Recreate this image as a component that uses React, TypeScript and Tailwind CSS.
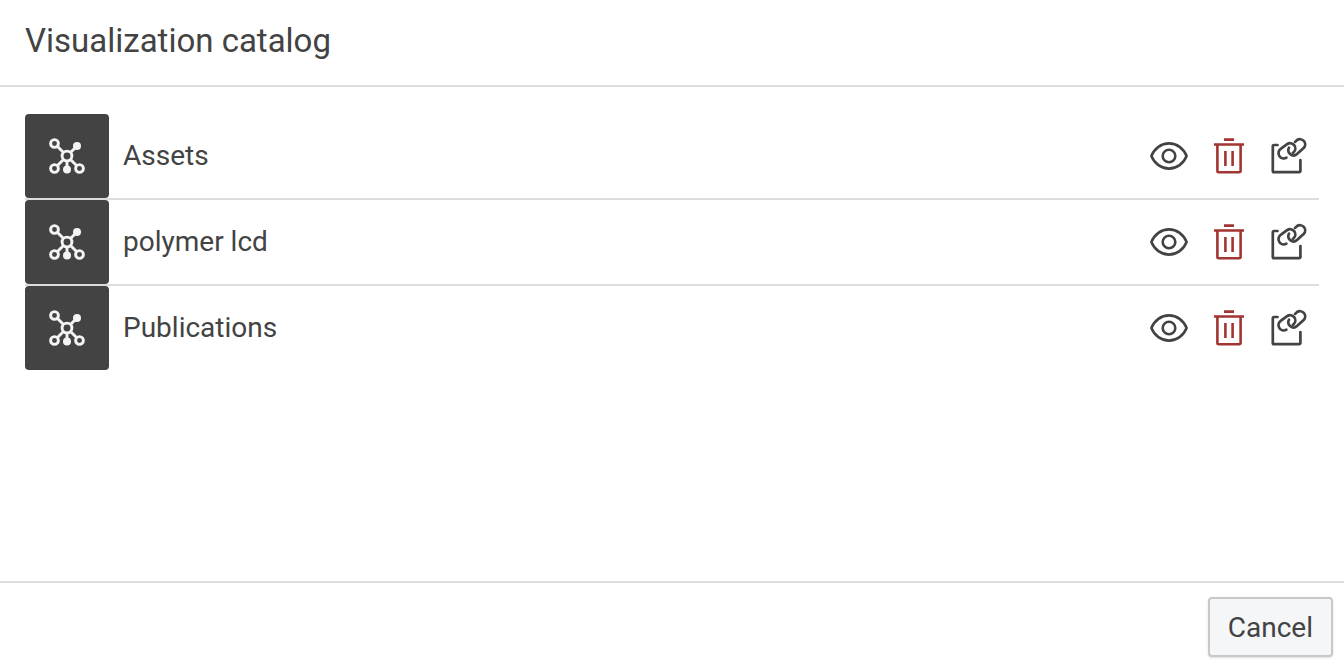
import React from "react";

const visualizations = ["Assets", "polymer lcd", "Publications"];

const GraphIcon = () => (
  <svg
    viewBox="0 0 40 40"
    className="w-10 h-10"
    fill="none"
    stroke="currentColor"
    strokeWidth="2.9"
    aria-hidden="true"
  >
    <path d="M10.5 10.5l6 6M23.5 16.5L29 11M16.5 23.5l-6 6M23.5 23.5l6 6M20 25v6" />
    <circle cx="20" cy="20" r="4.9" />
    <circle cx="7.5" cy="7.5" r="3.9" />
    <circle cx="7.5" cy="32.5" r="3.9" />
    <circle cx="32.5" cy="32.5" r="3.9" />
    <circle cx="30" cy="10" r="4" fill="currentColor" stroke="none" />
    <circle cx="20" cy="33.5" r="4" fill="currentColor" stroke="none" />
  </svg>
);

const ViewIcon = () => (
  <svg
    viewBox="0 0 40 40"
    className="w-10 h-10"
    fill="none"
    stroke="currentColor"
    strokeWidth="2.6"
    strokeLinejoin="round"
    aria-hidden="true"
  >
    <path d="M2.4 20C5.4 12.4 12.2 7.4 20 7.4S34.6 12.4 37.6 20C34.6 27.6 27.8 32.6 20 32.6S5.4 27.6 2.4 20z" />
    <circle cx="20" cy="20" r="6.3" />
  </svg>
);

const DeleteIcon = () => (
  <svg
    viewBox="0 0 40 40"
    className="w-10 h-10"
    fill="none"
    stroke="currentColor"
    strokeWidth="2.6"
    aria-hidden="true"
  >
    <path d="M15 3.6h10M5 8.5h30M8.4 8.5V35a1.2 1.2 0 0 0 1.2 1.2h20.8a1.2 1.2 0 0 0 1.2-1.2V8.5M16.4 15v15M23.6 15v15" />
  </svg>
);

const LinkIcon = () => (
  <svg
    viewBox="0 0 40 40"
    className="w-10 h-10"
    fill="none"
    stroke="currentColor"
    strokeWidth="2.7"
    strokeLinecap="round"
    strokeLinejoin="round"
    aria-hidden="true"
  >
    <path d="M8.5 9H5a1.2 1.2 0 0 0-1.2 1.2V35A1.2 1.2 0 0 0 5 36.2h25.2a1.2 1.2 0 0 0 1.2-1.2V24" />
    <path d="M26 5.9L27.9 4.2A5.2 5.2 0 0 1 34.9 11.8L28 18.1A5.2 5.2 0 0 1 20 11.7" />
    <path d="M17.4 21.6A5.2 5.2 0 0 1 12 12.7L18.1 8.2A5.2 5.2 0 0 1 24.6 16.3L23.8 16.9" />
  </svg>
);

const VisualizationRow = ({ name }: { name: string }) => (
  <li className="flex items-center border-b-2 border-[#dcdcdc] last:border-b-0">
    <div className="flex items-center justify-center w-21 h-21 rounded bg-[#434343] text-[#f4f4f4]">
      <GraphIcon />
    </div>
    <span className="flex-1 pl-3.5 text-[28px] leading-9">{name}</span>
    <div className="flex items-center gap-5 pr-2.5">
      <button type="button" aria-label={`View ${name}`}>
        <ViewIcon />
      </button>
      <button
        type="button"
        aria-label={`Delete ${name}`}
        className="text-[#a23531]"
      >
        <DeleteIcon />
      </button>
      <button type="button" aria-label={`Open link to ${name}`}>
        <LinkIcon />
      </button>
    </div>
  </li>
);

export default function App() {
  return (
    <div className="min-h-screen flex flex-col bg-white text-[#434343] font-[Roboto,sans-serif]">
      <header className="px-[25px] pt-[21px] pb-6 border-b-2 border-[#dcdcdc]">
        <h1 className="text-[33px] leading-10">Visualization catalog</h1>
      </header>
      <main className="flex-1 px-[25px] pt-[27px]">
        <ul>
          {visualizations.map((name) => (
            <VisualizationRow key={name} name={name} />
          ))}
        </ul>
      </main>
      <footer className="flex justify-end pt-3.5 pb-[11px] pr-[11px] border-t-2 border-[#dcdcdc]">
        <button
          type="button"
          className="h-15 px-[18px] pt-0.5 rounded border-2 border-[#c6c8ca] bg-[#f5f6f8] text-[28px] leading-9 shadow-sm"
        >
          Cancel
        </button>
      </footer>
    </div>
  );
}
